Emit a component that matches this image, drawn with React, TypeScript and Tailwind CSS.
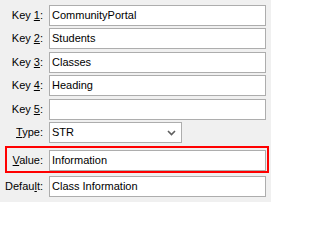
import type { ReactNode } from "react"

const font = { fontFamily: '"Liberation Sans", Arial, sans-serif' }

function Label({ children, className = "" }: { children: ReactNode; className?: string }) {
  return <div className={`text-right text-[11px] leading-none text-black ${className}`}>{children}</div>
}

function Field({ value }: { value: string }) {
  return (
    <div className="flex h-[21px] w-[217px] items-center border border-[#adadad] bg-white pl-[2px] text-[11px] text-black">
      {value}
    </div>
  )
}

const keys = [
  { n: "1", value: "CommunityPortal", mt: "mt-[5px]" },
  { n: "2", value: "Students", mt: "mt-[2px]" },
  { n: "3", value: "Classes", mt: "mt-[3px]" },
  { n: "4", value: "Heading", mt: "mt-[2px]" },
  { n: "5", value: "", mt: "mt-[3px]" },
]

export default function App() {
  return (
    <div className="h-[202px] w-[271px] overflow-hidden bg-[#f0f0f0]" style={font}>
      {keys.map((k) => (
        <div key={k.n} className={`flex items-center gap-[6px] ${k.mt}`}>
          <Label className="w-[43px]">
            Key <u className="underline-offset-1">{k.n}</u>:
          </Label>
          <Field value={k.value} />
        </div>
      ))}

      <div className="mt-[2px] flex items-center gap-[6px]">
        <Label className="w-[43px]">
          <u className="underline-offset-1">T</u>ype:
        </Label>
        <div className="flex h-[21px] w-[133px] items-center justify-between border border-[#adadad] bg-white pl-[2px] pr-[5px] text-[11px] text-black">
          <span>STR</span>
          <svg width="9" height="6" viewBox="0 0 9 6">
            <polyline points="1,1 4.5,4.5 8,1" fill="none" stroke="#5f5f5f" strokeWidth="1.6" />
          </svg>
        </div>
      </div>

      <div className="ml-[5px] mt-[3px] w-[264px] border-2 border-[#ff0000] pt-[2px]">
        <div className="flex items-center gap-[6px]">
          <Label className="w-[36px]">
            <u className="underline-offset-1">V</u>alue:
          </Label>
          <Field value="Information" />
        </div>
      </div>

      <div className="mt-[3px] flex items-center gap-[6px]">
        <Label className="w-[43px]">
          Defau<u className="underline-offset-1">l</u>t:
        </Label>
        <Field value="Class Information" />
      </div>
    </div>
  )
}
